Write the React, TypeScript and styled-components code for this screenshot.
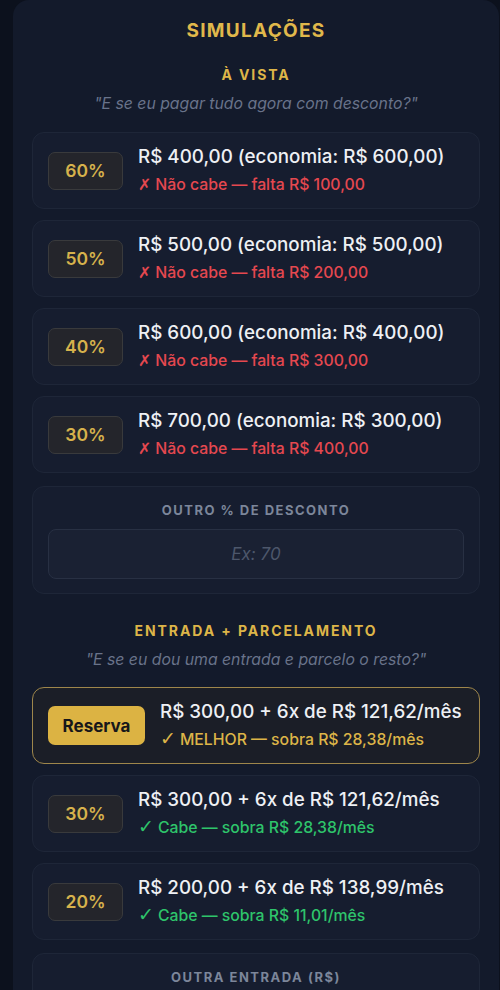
import styled, { createGlobalStyle, css } from "styled-components";

const GlobalStyle = createGlobalStyle`
  * { box-sizing: border-box; }
  html, body {
    margin: 0;
    padding: 0;
    background: #0c111d;
    font-family: "Inter", "Noto Sans", "DejaVu Sans", sans-serif;
    color: #eef0f4;
  }
`;

type Tone = "bad" | "good" | "best";

interface Option {
  badge: string;
  main: string;
  note: string;
  tone: Tone;
}

const vista: Option[] = [
  { badge: "60%", main: "R$ 400,00 (economia: R$ 600,00)", note: "Não cabe — falta R$ 100,00", tone: "bad" },
  { badge: "50%", main: "R$ 500,00 (economia: R$ 500,00)", note: "Não cabe — falta R$ 200,00", tone: "bad" },
  { badge: "40%", main: "R$ 600,00 (economia: R$ 400,00)", note: "Não cabe — falta R$ 300,00", tone: "bad" },
  { badge: "30%", main: "R$ 700,00 (economia: R$ 300,00)", note: "Não cabe — falta R$ 400,00", tone: "bad" },
];

const entrada: Option[] = [
  { badge: "Reserva", main: "R$ 300,00 + 6x de R$ 121,62/mês", note: "MELHOR — sobra R$ 28,38/mês", tone: "best" },
  { badge: "30%", main: "R$ 300,00 + 6x de R$ 121,62/mês", note: "Cabe — sobra R$ 28,38/mês", tone: "good" },
  { badge: "20%", main: "R$ 200,00 + 6x de R$ 138,99/mês", note: "Cabe — sobra R$ 11,01/mês", tone: "good" },
];

const noteColor: Record<Tone, string> = {
  bad: "#e5484f",
  good: "#2ec46b",
  best: "#ddb548",
};

function App() {
  return (
    <>
      <GlobalStyle />
      <Panel>
        <Title>SIMULAÇÕES</Title>

        <SectionTitle>À VISTA</SectionTitle>
        <Question>"E se eu pagar tudo agora com desconto?"</Question>
        <List>
          {vista.map((o) => (
            <OptionCard key={o.badge} option={o} />
          ))}
          <InputCard>
            <InputLabel>OUTRO % DE DESCONTO</InputLabel>
            <Field placeholder="Ex: 70" />
          </InputCard>
        </List>

        <SectionTitle $spaced>ENTRADA + PARCELAMENTO</SectionTitle>
        <Question>"E se eu dou uma entrada e parcelo o resto?"</Question>
        <List $tight>
          {entrada.map((o) => (
            <OptionCard key={o.badge} option={o} />
          ))}
          <InputCard>
            <InputLabel>OUTRA ENTRADA (R$)</InputLabel>
            <Field placeholder="Ex: 250" />
          </InputCard>
        </List>
      </Panel>
    </>
  );
}

function OptionCard({ option }: { option: Option }) {
  const best = option.tone === "best";
  return (
    <Card $best={best}>
      <Badge $best={best}>{option.badge}</Badge>
      <Info>
        <Main>{option.main}</Main>
        <Note $tone={option.tone}>
          <Mark $big={option.tone !== "bad"}>{option.tone === "bad" ? "✗" : "✓"}</Mark>
          {option.note}
        </Note>
      </Info>
    </Card>
  );
}

const Panel = styled.div`
  margin-left: 13px;
  width: 486px;
  min-height: 1100px;
  background: #131a2b;
  border-radius: 16px 16px 0 0;
  padding: 17px 19px 40px;
`;

const Title = styled.h1`
  margin: 0;
  text-align: center;
  font-size: 19px;
  line-height: 28px;
  font-weight: 700;
  letter-spacing: 1.3px;
  color: #e0b84b;
`;

const SectionTitle = styled.h2<{ $spaced?: boolean }>`
  margin: ${({ $spaced }) => ($spaced ? "27px" : "20px")} 0 0;
  text-align: center;
  font-size: 14px;
  line-height: 20px;
  font-weight: 700;
  letter-spacing: 1.9px;
  color: #ddb548;
`;

const Question = styled.p`
  margin: 9px 0 0;
  text-align: center;
  font-size: 15.8px;
  line-height: 20px;
  font-style: italic;
  color: #69738a;
`;

const List = styled.div<{ $tight?: boolean }>`
  display: flex;
  flex-direction: column;
  gap: 11px;
  margin-top: ${({ $tight }) => ($tight ? "17px" : "18px")};
`;

const Card = styled.div<{ $best?: boolean }>`
  display: flex;
  align-items: center;
  gap: 15px;
  padding: 12px 15px;
  border-radius: 12px;
  background: #161d2f;
  border: 1px solid #1e2638;
  ${({ $best }) =>
    $best &&
    css`
      background: #1b1e27;
      border: 1.5px solid #9e864b;
    `}
`;

const Badge = styled.div<{ $best?: boolean }>`
  flex: none;
  display: flex;
  align-items: center;
  justify-content: center;
  width: 75px;
  height: 38px;
  border-radius: 7px;
  background: #24252b;
  border: 1px solid #393a3c;
  color: #d6b24c;
  font-size: 17.5px;
  font-weight: 600;
  ${({ $best }) =>
    $best &&
    css`
      width: 97px;
      height: 39px;
      background: #dcb343;
      border: none;
      color: #17171a;
      font-size: 17px;
      font-weight: 700;
    `}
`;

const Info = styled.div`
  display: flex;
  flex-direction: column;
  gap: 5px;
  min-width: 0;
`;

const Main = styled.div`
  font-size: 18.8px;
  line-height: 24px;
  font-weight: 500;
  color: #eef0f4;
  white-space: nowrap;
`;

const Note = styled.div<{ $tone: Tone }>`
  font-size: 15.8px;
  line-height: 22px;
  font-weight: 500;
  color: ${({ $tone }) => noteColor[$tone]};
  white-space: nowrap;
`;

const Mark = styled.span<{ $big?: boolean }>`
  font-family: "DejaVu Sans", sans-serif;
  font-weight: 700;
  font-size: ${({ $big }) => ($big ? "1.2em" : "1em")};
  line-height: 0;
  margin-right: 4px;
`;

const InputCard = styled.div`
  display: flex;
  flex-direction: column;
  align-items: stretch;
  gap: 10px;
  padding: 14px 15px;
  border-radius: 12px;
  background: #161d2f;
  border: 1px solid #1e2638;
  margin-top: 2px;
`;

const InputLabel = styled.div`
  text-align: center;
  font-size: 13px;
  line-height: 18px;
  font-weight: 700;
  letter-spacing: 1.5px;
  color: #7c869a;
`;

const Field = styled.input`
  height: 50px;
  width: 100%;
  border-radius: 8px;
  background: #1a2133;
  border: 1px solid #283043;
  text-align: center;
  font-family: inherit;
  font-size: 17px;
  color: #eef0f4;
  outline: none;
  &::placeholder {
    color: #4d576b;
    font-style: italic;
  }
`;

export default App;
